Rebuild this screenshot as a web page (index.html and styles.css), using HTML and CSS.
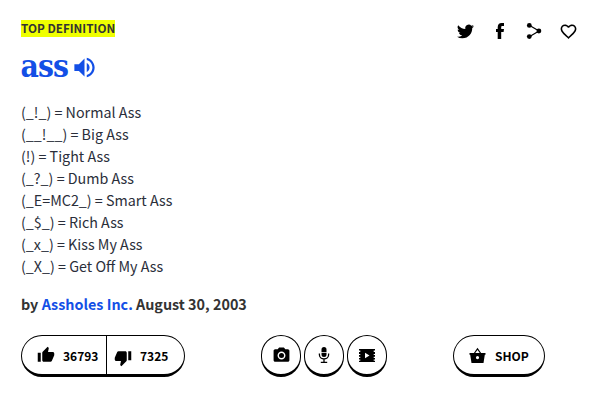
FILE: index.html
```html
<!DOCTYPE html>
<html lang="en">
<head>
<meta charset="utf-8">
<title>ass</title>
<link rel="stylesheet" href="styles.css">
</head>
<body>
<article class="card">
  <header class="top">
    <span class="ribbon">TOP DEFINITION</span>
    <nav class="social">
      <svg viewBox="0 0 24 24" class="twitter"><path d="M24 4.6a10 10 0 0 1-2.8.8 5 5 0 0 0 2.1-2.7 10 10 0 0 1-3.1 1.2 4.9 4.9 0 0 0-8.4 4.5A14 14 0 0 1 1.7 3.1a4.9 4.9 0 0 0 1.5 6.6 4.9 4.9 0 0 1-2.2-.6 4.9 4.9 0 0 0 3.9 4.9 5 5 0 0 1-2.2.1 4.9 4.9 0 0 0 4.6 3.4A9.9 9.9 0 0 1 0 19.5a13.900 13.900 0 0 0 7.500 2.200c9.100 0 14.300-7.700 14-14.600A10 10 0 0 0 24 4.600z"/></svg>
      <svg viewBox="0 0 16 16" class="facebook"><path d="M5.700 16V9H4V6h1.700V4.200C5.700 1.500 7.200 0 9.600 0H12v3h-1.500C9.500 3 9.200 3.400 9.200 4.400V6H12l-.4 3H9.200v7z"/></svg>
      <svg viewBox="0 0 16 16" class="share"><path d="M3.300 2.300 13 8l-9.700 5.700" fill="none" stroke="currentColor" stroke-width="1.200"/><circle cx="3.300" cy="2.400" r="2.400"/><circle cx="12.900" cy="8" r="2.400"/><circle cx="3.300" cy="13.600" r="2.400"/></svg>
      <svg viewBox="0 0 24 24" class="heart"><path d="M16.500 3c-1.740 0-3.410.81-4.500 2.090C10.910 3.810 9.240 3 7.500 3 4.420 3 2 5.420 2 8.500c0 3.780 3.400 6.860 8.550 11.540L12 21.350l1.450-1.320C18.600 15.360 22 12.280 22 8.500 22 5.420 19.580 3 16.500 3zm-4.400 15.550l-.1.100-.1-.1C7.140 14.240 4 11.390 4 8.500 4 6.500 5.500 5 7.500 5c1.540 0 3.040.99 3.570 2.360h1.870C13.460 5.990 14.960 5 16.500 5c2 0 3.500 1.500 3.500 3.500 0 2.890-3.140 5.740-7.900 10.050z"/></svg>
    </nav>
  </header>

  <h1 class="word"><span>ass</span>
    <svg viewBox="0 0 24 24" class="sound"><path d="M3 9v6h4l5 5V4L7 9H3zm13.500 3c0-1.770-1.020-3.290-2.500-4.030v8.050c1.480-.73 2.500-2.250 2.500-4.020zM14 3.230v2.060c2.890.86 5 3.540 5 6.710s-2.110 5.850-5 6.710v2.060c4.010-.91 7-4.490 7-8.770s-2.990-7.860-7-8.770z"/></svg>
  </h1>

  <div class="meaning">
    <div>(_!_) = Normal Ass</div>
    <div>(__!__) = Big Ass</div>
    <div>(!) = Tight Ass</div>
    <div>(_?_) = Dumb Ass</div>
    <div>(_E=MC2_) = Smart Ass</div>
    <div>(_$_) = Rich Ass</div>
    <div>(_x_) = Kiss My Ass</div>
    <div>(_X_) = Get Off My Ass</div>
  </div>

  <p class="author">by <a>Assholes Inc.</a> August 30, 2003</p>

  <footer class="actions">
    <div class="pill votes">
      <div class="vote up">
        <svg viewBox="0 0 24 24"><path d="M1 21h4V9H1v12zm22-11c0-1.100-.9-2-2-2h-6.310l.95-4.570.03-.32c0-.41-.17-.79-.44-1.060L14.170 1 7.590 7.590C7.220 7.950 7 8.450 7 9v10c0 1.100.9 2 2 2h9c.83 0 1.540-.5 1.840-1.220l3.020-7.050c.09-.23.14-.47.14-.73v-2z"/></svg>
        <span>36793</span>
      </div>
      <div class="vote down">
        <svg viewBox="0 0 24 24"><path d="M15 3H6c-.83 0-1.540.5-1.840 1.220l-3.020 7.050c-.09.23-.14.47-.14.73v2c0 1.100.9 2 2 2h6.310l-.95 4.570-.03.32c0 .41.17.79.44 1.060L9.830 23l6.590-6.590c.36-.36.58-.86.58-1.410V5c0-1.100-.9-2-2-2zm4 0v12h4V3h-4z"/></svg>
        <span>7325</span>
      </div>
    </div>
    <div class="media">
      <div class="pill round"><svg viewBox="0 0 24 24" class="camera"><circle cx="12" cy="12" r="3.200"/><path d="M9 2L7.170 4H4c-1.100 0-2 .9-2 2v12c0 1.100.9 2 2 2h16c1.100 0 2-.9 2-2V6c0-1.100-.9-2-2-2h-3.170L15 2H9zm3 15c-2.760 0-5-2.240-5-5s2.240-5 5-5 5 2.240 5 5-2.240 5-5 5z"/></svg></div>
      <div class="pill round"><svg viewBox="0 0 16 16" class="mic"><path d="M5.500 5V2.500a2.500 2.500 0 0 1 5 0V5zM5.500 5.700h5V7.500a2.500 2.500 0 0 1-5 0z"/><path d="M3.400 6.500v1.200a4.600 4.200 0 0 0 9.200 0V6.500M8 12v3M4.800 15.300h6.400" fill="none" stroke="currentColor" stroke-width="1.300"/></svg></div>
      <div class="pill round"><svg viewBox="0 0 16 13" class="film"><path fill-rule="evenodd" d="M0 0h16v1.600h-1.300v1.500H16v1.800h-1.300v1.100H16v1.700h-1.300v1.200H16v1.700h-1.300v1.200H16V13H0v-1.200h1.300v-1.200H0V8.900h1.300V7.700H0V6h1.300V4.900H0V3.100h1.300V1.600H0zM6 3.800v5.400l4.500-2.700z"/></svg></div>
    </div>
    <div class="pill shop">
      <svg viewBox="0 0 16 15"><path fill-rule="evenodd" d="M0 5h16v1.800h-.7L14 15H2L.7 6.800H0zM8 8a1.600 1.600 0 1 0 0 3.200A1.600 1.600 0 0 0 8 8z"/><path d="M4.700 5.500 8 .8l3.300 4.700" fill="none" stroke="currentColor" stroke-width="1.200"/></svg>
      <span>SHOP</span>
    </div>
  </footer>
</article>
</body>
</html>
```
FILE: styles.css
```css
* { box-sizing: border-box; }
body {
  margin: 0;
  background: #fff;
  color: #333;
  font-family: "Noto Sans CJK SC", "Open Sans", sans-serif;
}
svg { display: block; flex: none; fill: currentColor; overflow: visible; }
.card { padding: 20px 26px 0 21px; }
.top { display: flex; justify-content: space-between; height: 24px; }
.ribbon {
  height: 17px;
  background: #efff00;
  font-size: 11.7px;
  font-weight: 700;
  line-height: 15px;
  white-space: nowrap;
}
.social { display: flex; align-items: center; height: 22px; color: #000; }
.twitter { width: 17px; height: 17px; margin-right: 18px; }
.facebook { width: 16px; height: 16px; margin-right: 18px; }
.share { width: 16px; height: 16px; margin-right: 17px; }
.heart { width: 19px; height: 19px; }
.word {
  display: flex;
  align-items: center;
  gap: 6px;
  height: 44px;
  margin: 0;
  color: #134fe6;
  font: 700 31.5px/44px "DejaVu Serif Condensed", "DejaVu Serif", serif;
  font-stretch: condensed;
  letter-spacing: -0.9px;
}
.word span { width: 44px; margin-left: -0.5px; margin-right: 0.5px; }
.sound { width: 27px; height: 27px; margin-top: 3px; }
.meaning {
  margin-top: 13px;
  color: #2a2e3a;
  font-size: 14.300px;
  line-height: 22px;
}
.author {
  margin: 16px 0 0;
  font-size: 14.350px;
  font-weight: 700;
  line-height: 22px;
}
.author a { color: #134fe6; }
.actions { display: flex; margin-top: 20px; color: #000; font-size: 12px; font-weight: 700; }
.pill {
  display: flex;
  align-items: center;
  height: 42px;
  border: 1px solid #000;
  border-bottom-width: 3px;
  border-radius: 21px;
}
.votes { width: 164px; }
.vote { display: flex; align-items: center; height: 100%; }
.vote svg { width: 18px; height: 18px; }
.up { width: 85px; padding-left: 14.5px; gap: 8.5px; border-right: 1px solid #000; }
.down { padding-left: 6.5px; gap: 8.5px; }
.down svg { margin-top: 6px; }
.vote span, .shop span { padding-top: 1px; }
.media { display: flex; gap: 3px; margin-left: 76px; }
.round { width: 40px; justify-content: center; }
.camera { width: 19px; height: 19px; }
.mic { width: 16px; height: 16px; }
.film { width: 16px; height: 13px; }
.shop { width: 92px; margin-left: 66px; padding-left: 15px; gap: 9px; }
.shop svg { width: 17px; height: 15px; }
```
